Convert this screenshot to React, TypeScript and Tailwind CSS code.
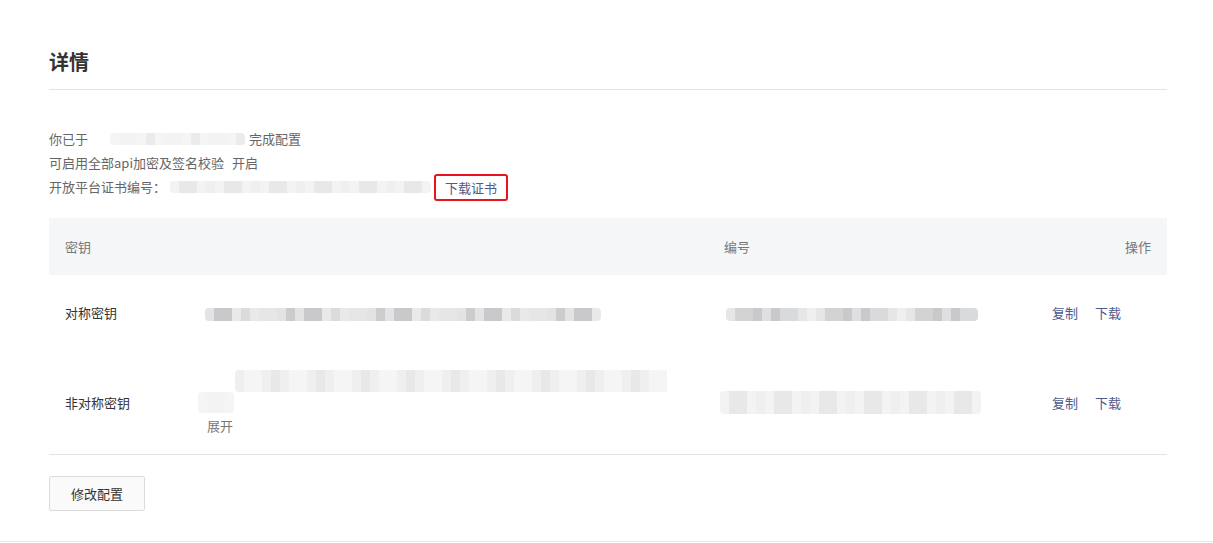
import React from 'react';

const shades = [
  'bg-[#d3d3d4]',
  'bg-[#dedfe0]',
  'bg-[#e6e6e6]',
  'bg-[#cdcccd]',
  'bg-[#e9e9e9]',
  'bg-[#d8dadb]',
  'bg-[#efefef]',
  'bg-[#c9c8cb]',
  'bg-[#dcdbd9]',
  'bg-[#e2e3e5]',
];

const lightShades = ['bg-[#efefef]', 'bg-[#f3f3f3]', 'bg-[#ebebeb]', 'bg-[#f5f5f5]', 'bg-[#e8e8e8]'];

// pixelated redacted value
const Blur: React.FC<{ width: number; seed: number; h?: string; light?: boolean; className?: string }> = ({
  width,
  seed,
  h = 'h-[13px]',
  light,
  className = '',
}) => {
  const count = Math.round(width / 9);
  const pal = light ? lightShades : shades;
  return (
    <span className={`inline-flex rounded-[4px] overflow-hidden align-middle ${h} ${className}`}>
      {Array.from({ length: count }).map((_, i) => (
        <span key={i} className={`w-[9px] h-full ${pal[(i * 7 + seed * 3 + ((i * i) % 5)) % pal.length]}`} />
      ))}
    </span>
  );
};

const Link: React.FC<{ children: React.ReactNode }> = ({ children }) => (
  <a className="text-[#4d5b8e] cursor-pointer">{children}</a>
);

export default function App() {
  return (
    <div className="w-full bg-white border-b border-[#e6e6e6] font-['Microsoft_YaHei','Noto_Sans_CJK_SC',sans-serif] text-[13px]">
      <div className="pl-[49px] pr-[46px] pb-[30px]">
        <h1 className="pt-[48px] pb-[13px] text-[20px] leading-[28px] font-bold text-[#333] border-b border-[#e4e4e4]">
          详情
        </h1>

        <div className="mt-[37px] text-[#666] leading-[24px]">
          <div className="flex items-center">
            <span>你已于</span>
            <Blur width={135} seed={1} h="h-[12px]" light className="ml-[22px] mr-[4px]" />
            <span>完成配置</span>
          </div>
          <div>
            可启用全部api加密及签名校验<span className="ml-[8px]">开启</span>
          </div>
          <div className="flex items-center">
            <span>开放平台证书编号：</span>
            <Blur width={263} seed={2} h="h-[12px]" light className="ml-[4px]" />
            <span className="ml-[3px] -my-[2px] inline-block border-2 border-[#e8141b] rounded-[3px] px-[9px] leading-[23px] text-[#4d5b8e]">
              下载证书
            </span>
          </div>
        </div>

        <div className="mt-[19px]">
          <div className="grid grid-cols-[156px_519px_1fr_131px] h-[57px] items-center bg-[#f5f6f7] text-[#777]">
            <div className="pl-4">密钥</div>
            <div />
            <div>编号</div>
            <div className="text-right pr-4">操作</div>
          </div>

          <div className="grid grid-cols-[156px_519px_1fr_131px] h-[76px] items-center text-[#333]">
            <div className="pl-4">对称密钥</div>
            <div>
              <Blur width={400} seed={3} />
            </div>
            <div className="pl-[2px]">
              <Blur width={252} seed={4} />
            </div>
            <div className="pl-4 flex gap-[17px]">
              <Link>复制</Link>
              <Link>下载</Link>
            </div>
          </div>

          <div className="grid grid-cols-[156px_519px_1fr_131px] h-[104px] items-center text-[#333] border-b border-[#e4e4e4]">
            <div className="pl-4">非对称密钥</div>
            <div className="-ml-[7px]">
              <div className="flex flex-col">
                <Blur width={430} seed={5} light className="ml-[37px] h-[22px]" />
                <Blur width={36} seed={6} light className="h-[21px] w-[36px]" />
              </div>
              <div className="ml-[9px] mt-[3px] text-[#777] leading-[20px]">展开</div>
            </div>
            <div className="-ml-[4px]">
              <Blur width={257} seed={7} light className="h-[23px]" />
            </div>
            <div className="pl-4 flex gap-[17px]">
              <Link>复制</Link>
              <Link>下载</Link>
            </div>
          </div>
        </div>

        <button className="mt-[21px] h-[35px] w-[96px] border border-[#dcdcdc] rounded-[2px] bg-[#fafafa] text-[#333]">
          修改配置
        </button>
      </div>
    </div>
  );
}
